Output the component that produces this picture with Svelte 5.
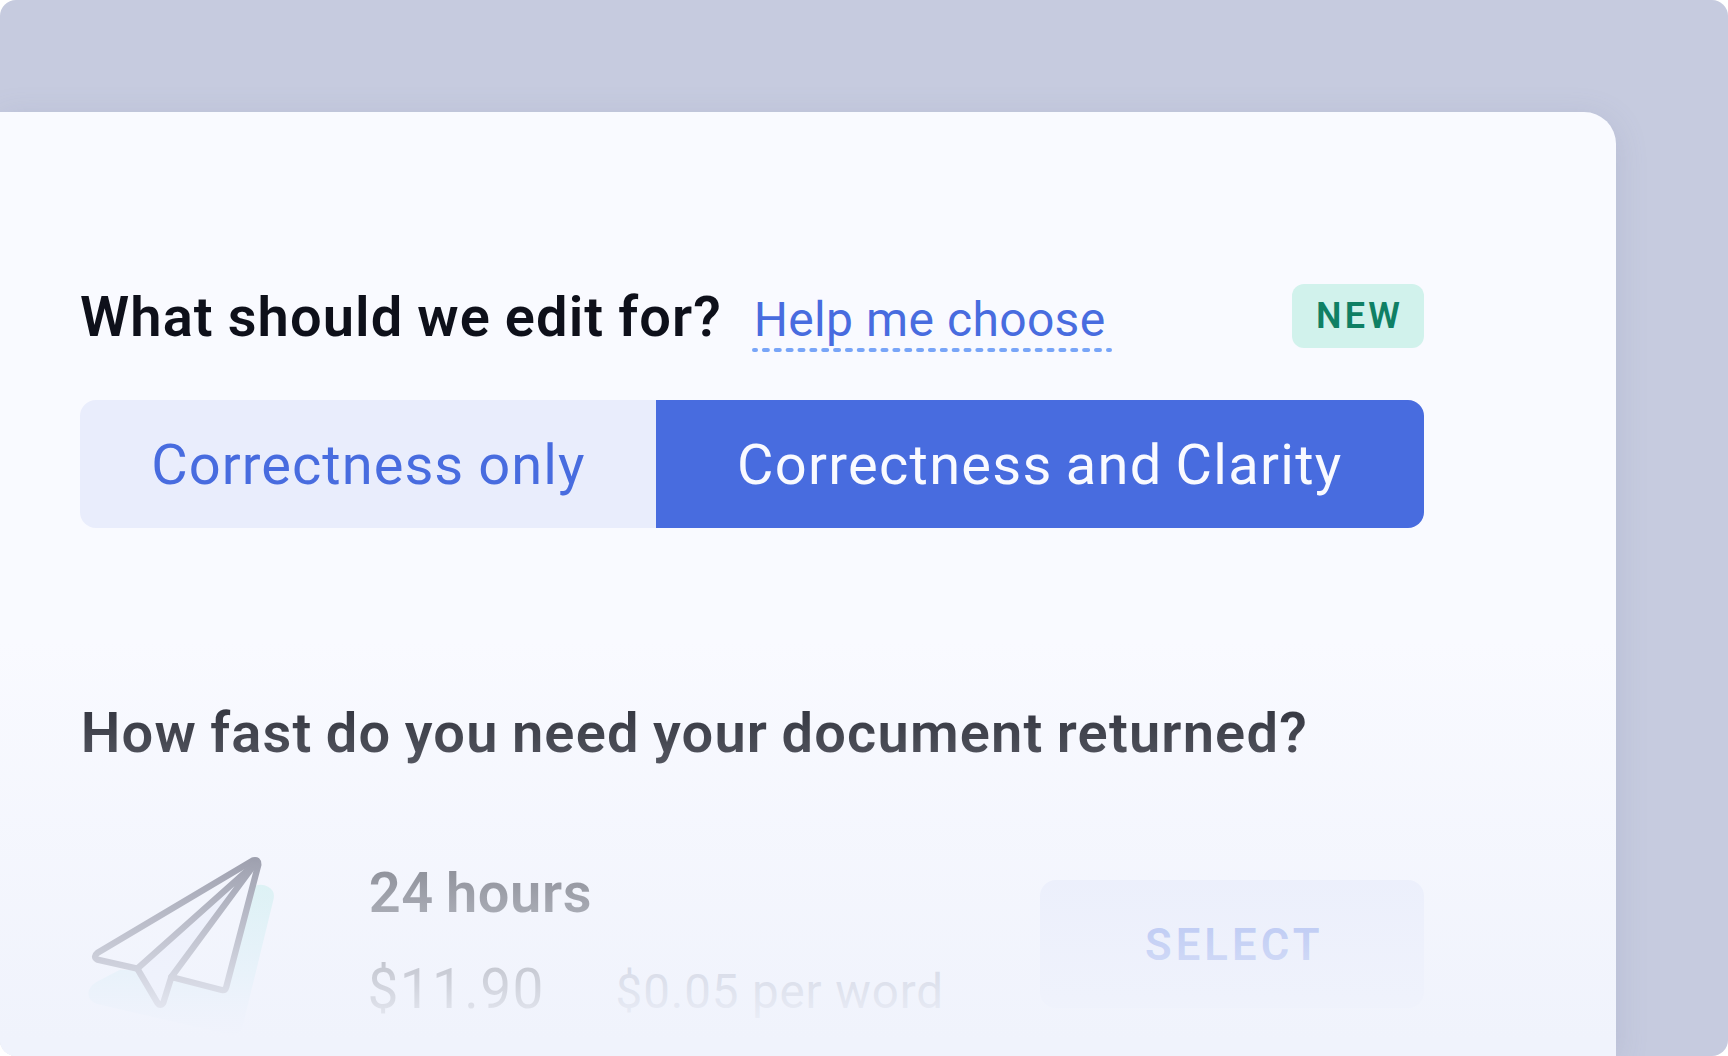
<script>
  // The underline is a run of short round-capped dashes with a half dash at each end.
  const dashes = Array.from({ length: 29 }, (_, i) => 13.9 + i * 11.86);
</script>

<div class="backdrop">
  <main class="panel">
    <section class="question">
      <header class="head">
        <h2 class="title">What should we edit for?</h2>
        <a class="help" href="#help">
          <span>Help me choose</span>
          <svg width="360" height="4" viewBox="0 0 360 4" aria-hidden="true">
            <rect x="0" y="0" width="6" height="4" rx="2" />
            {#each dashes as cx}
              <rect x={cx - 4} y="0" width="8" height="4" rx="2" />
            {/each}
            <rect x="354" y="0" width="6" height="4" rx="2" />
          </svg>
        </a>
        <span class="badge">NEW</span>
      </header>
      <div class="segments">
        <button class="segment">Correctness only</button>
        <button class="segment selected">Correctness and Clarity</button>
      </div>
    </section>

    <section class="speed">
      <h2 class="title second">How fast do you need your document returned?</h2>
      <div class="plan">
        <svg class="plane" width="230" height="216" viewBox="0 0 690 648" aria-hidden="true">
          <defs>
            <linearGradient id="shade" x1="0" y1="0" x2="0" y2="1">
              <stop offset="0" stop-color="#bff0e9" />
              <stop offset="0.6" stop-color="#c2edf1" />
              <stop offset="1" stop-color="#dfe9fa" />
            </linearGradient>
          </defs>
          <path fill="url(#shade)" d="M556 137 Q577 131 594 140 Q616 152 611 176 L517 562 Q510 590 475 583 L85 493 Q55 485 55 460 Q57 440 78 427 L150 389 L460 400Z" />
          <path class="face" d="M550 61 L83 338 Q68 350 82 359 L202 386 L262 490 Q271 500 280 488 L304 411 L455 450 Q466 452 469 440 L565 74Z" />
          <path class="fold" d="M202 386 L551 72 L304 411 L280 488 Q271 500 262 490Z" />
          <g class="lines">
            <path d="M550 61 L83 338 Q68 350 82 359 L202 386 L262 488 Q271 501 280 488 L304 411 L455 450 Q466 452 469 440 L565 74 Q565 57 550 61Z" />
            <path d="M202 386 L556 70 L304 411" />
            <path d="M548 72 L560 76" />
          </g>
        </svg>
        <div class="info">
          <h3>24 hours</h3>
          <p><span class="price">$11.90</span><span class="rate">$0.05 per word</span></p>
        </div>
        <button class="select">SELECT</button>
      </div>
    </section>
    <div class="fade"></div>
  </main>
</div>

<style>
  :global(body) {
    margin: 0;
    background: #fff;
  }
  .backdrop {
    box-sizing: border-box;
    width: 1728px;
    height: 1056px;
    padding-top: 112px;
    overflow: hidden;
    border-radius: 16px;
    background: #c6cbdf;
    font-family: Roboto, "Liberation Sans", sans-serif;
    color: #0e101a;
    white-space: nowrap;
  }
  .panel {
    position: relative;
    box-sizing: border-box;
    width: 1616px;
    height: 944px;
    padding: 172px 192px 0 80px;
    border-top-right-radius: 32px;
    background: #f9faff;
    box-shadow: 0 6px 32px rgba(109, 118, 160, 0.18);
  }
  h2, h3, p { margin: 0; }
  button {
    box-sizing: border-box;
    border: 0;
    padding: 0;
    font: inherit;
    text-align: left;
  }
  .head {
    display: flex;
    align-items: flex-start;
    height: 116px;
  }
  .title {
    flex: 0 0 672px;
    font-size: 56px;
    font-weight: 600;
    line-height: 66px;
    letter-spacing: 1.12px;
    word-spacing: -1.2px;
  }
  .title.second {
    margin-top: 172px;
    padding-left: 0.7px;
    letter-spacing: 1.18px;
    word-spacing: -1.8px;
  }
  .help {
    display: flex;
    flex-direction: column;
    width: 360px;
    color: #486cdf;
    font-size: 48px;
    line-height: 71px;
    letter-spacing: 0.3px;
    word-spacing: 0.6px;
    text-decoration: none;
  }
  .help span {
    height: 64px;
    padding-left: 1.8px;
  }
  .help svg { fill: #78a5f8; }
  .badge {
    box-sizing: border-box;
    width: 132px;
    height: 64px;
    margin-left: auto;
    padding-left: 24px;
    border-radius: 12px;
    background: #d1f2ec;
    color: #0f8064;
    font-size: 36px;
    font-weight: 600;
    line-height: 64px;
    letter-spacing: 3.3px;
  }
  .segments {
    display: grid;
    grid-template-columns: 576px 768px;
    height: 128px;
    overflow: hidden;
    border-radius: 16px;
  }
  .segment {
    height: 128px;
    padding-left: 71.2px;
    background: #e9edfc;
    color: #486cdf;
    font-size: 56px;
    line-height: 130px;
    letter-spacing: 1.05px;
    word-spacing: -1px;
  }
  .segment.selected {
    padding-left: 80.9px;
    background: #486cdf;
    color: #f9faff;
    letter-spacing: 1.3px;
    word-spacing: -2.2px;
  }
  .plan {
    display: flex;
    align-items: flex-start;
    height: 216px;
    margin-top: 74px;
  }
  .plane {
    flex: none;
    margin-left: -10px;
  }
  .face { fill: #f9faff; }
  .fold { fill: #e9edfc; }
  .lines {
    fill: none;
    stroke: #3c3d52;
    stroke-width: 19;
    stroke-linejoin: round;
    stroke-linecap: round;
  }
  .info {
    padding: 20px 0 0 67.4px;
    line-height: 66px;
  }
  .info h3 {
    padding-left: 1.4px;
    font-size: 56px;
    font-weight: 600;
    letter-spacing: 0.6px;
    word-spacing: -2.6px;
  }
  .info p {
    display: flex;
    align-items: baseline;
    margin-top: 30px;
  }
  .price {
    width: 248.2px;
    font-size: 55px;
    letter-spacing: 1.4px;
  }
  .rate {
    color: #6d758d;
    font-size: 47.5px;
    letter-spacing: 0.88px;
  }
  .select {
    width: 384px;
    height: 128px;
    margin: 40px 0 0 auto;
    padding-left: 105px;
    border-radius: 16px;
    background: #e6eafb;
    color: #486cdf;
    font-size: 43.6px;
    font-weight: 600;
    line-height: 132px;
    letter-spacing: 4.08px;
  }
  /* Veil that dissolves the lower options into the panel's bottom edge. */
  .fade {
    position: absolute;
    inset: 528px 0 0 0;
    background: linear-gradient(rgba(240, 243, 252, 0), #f0f3fc 400px);
    pointer-events: none;
  }
</style>
